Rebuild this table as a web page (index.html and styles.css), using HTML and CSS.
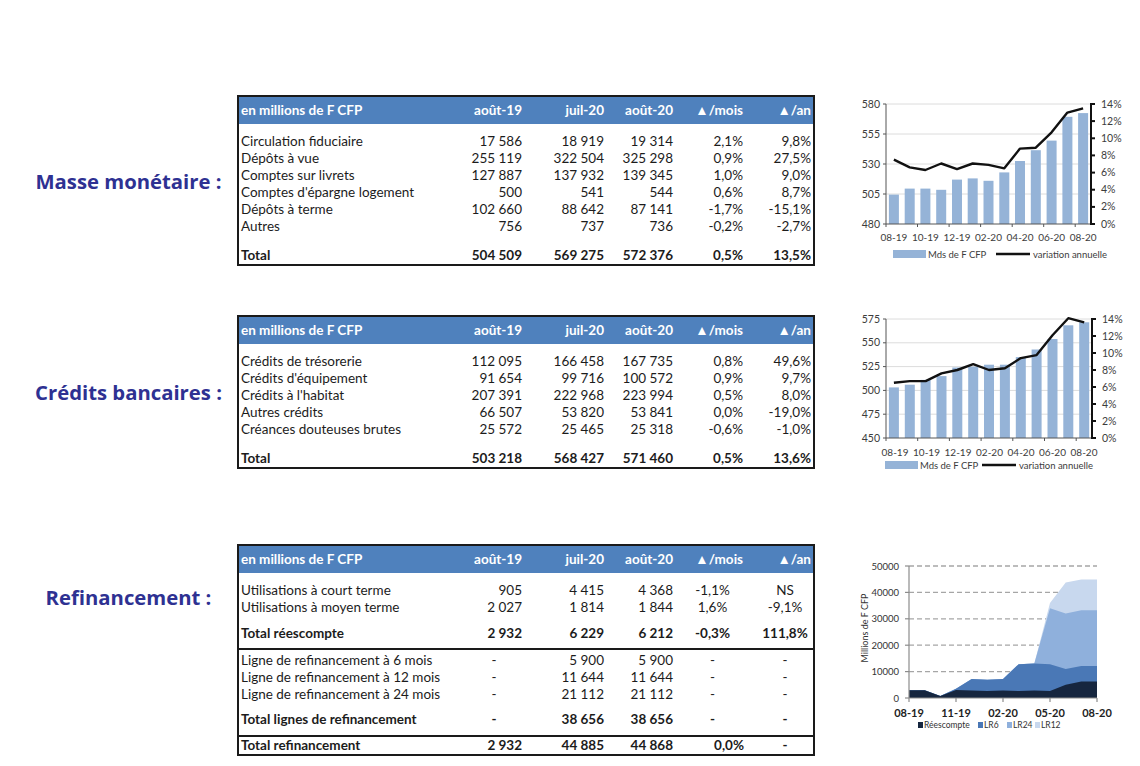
FILE: index.html
```html
<!DOCTYPE html>
<html lang="fr">
<head>
<meta charset="utf-8">
<title>Indicateurs monétaires</title>
<link rel="stylesheet" href="styles.css">
</head>
<body>
<main class="page">

<section class="block block-masse">
  <h2 class="label">Masse monétaire :</h2>
  <table class="tbl">
    <colgroup><col class="w1"><col class="w2"><col class="w3"><col class="w4"><col class="w5"><col class="w6"></colgroup>
    <thead><tr><th class="c-lbl">en millions de F CFP</th><th>août-19</th><th>juil-20</th><th>août-20</th><th>▲/mois</th><th class="last">▲/an</th></tr></thead>
    <tbody>
      <tr class="first"><td class="c-lbl">Circulation fiduciaire</td><td>17 586</td><td>18 919</td><td>19 314</td><td>2,1%</td><td class="last">9,8%</td></tr>
      <tr><td class="c-lbl">Dépôts à vue</td><td>255 119</td><td>322 504</td><td>325 298</td><td>0,9%</td><td class="last">27,5%</td></tr>
      <tr><td class="c-lbl">Comptes sur livrets</td><td>127 887</td><td>137 932</td><td>139 345</td><td>1,0%</td><td class="last">9,0%</td></tr>
      <tr><td class="c-lbl">Comptes d'épargne logement</td><td>500</td><td>541</td><td>544</td><td>0,6%</td><td class="last">8,7%</td></tr>
      <tr><td class="c-lbl">Dépôts à terme</td><td>102 660</td><td>88 642</td><td>87 141</td><td>-1,7%</td><td class="last">-15,1%</td></tr>
      <tr><td class="c-lbl">Autres</td><td>756</td><td>737</td><td>736</td><td>-0,2%</td><td class="last">-2,7%</td></tr>
      <tr class="total"><td class="c-lbl">Total</td><td>504 509</td><td>569 275</td><td>572 376</td><td>0,5%</td><td class="last">13,5%</td></tr>
    </tbody>
  </table>
  <figure class="chart">
    <svg width="290" height="171" viewBox="0 0 290 171">
      <g class="grid">
        <line x1="36" y1="9" x2="241" y2="9"/><line x1="36" y1="39" x2="241" y2="39"/>
        <line x1="36" y1="69" x2="241" y2="69"/><line x1="36" y1="99" x2="241" y2="99"/>
      </g>
      <g class="bars">
        <rect x="38.9" y="99.6" width="10" height="29.4"/><rect x="54.7" y="93.6" width="10" height="35.4"/>
        <rect x="70.4" y="93.6" width="10" height="35.4"/><rect x="86.2" y="94.8" width="10" height="34.2"/>
        <rect x="102" y="84.6" width="10" height="44.4"/><rect x="117.7" y="83.4" width="10" height="45.6"/>
        <rect x="133.5" y="85.8" width="10" height="43.2"/><rect x="149.3" y="77.4" width="10" height="51.6"/>
        <rect x="165" y="66" width="10" height="63"/><rect x="180.8" y="55.2" width="10" height="73.8"/>
        <rect x="196.6" y="45.6" width="10" height="83.4"/><rect x="212.4" y="21.8" width="10" height="107.2"/>
        <rect x="228.1" y="18.1" width="10" height="110.9"/>
      </g>
      <g class="axis">
        <line x1="36" y1="9" x2="36" y2="129"/><line x1="36" y1="129" x2="241" y2="129"/>
        <line x1="33" y1="9" x2="36" y2="9"/><line x1="33" y1="39" x2="36" y2="39"/><line x1="33" y1="69" x2="36" y2="69"/><line x1="33" y1="99" x2="36" y2="99"/><line x1="33" y1="129" x2="36" y2="129"/>
        <line x1="36" y1="129" x2="36" y2="132"/><line x1="67.5" y1="129" x2="67.5" y2="132"/><line x1="99.1" y1="129" x2="99.1" y2="132"/><line x1="130.6" y1="129" x2="130.6" y2="132"/><line x1="162.2" y1="129" x2="162.2" y2="132"/><line x1="193.7" y1="129" x2="193.7" y2="132"/><line x1="225.2" y1="129" x2="225.2" y2="132"/>
      </g>
      <g class="axis-r">
        <line x1="241" y1="8" x2="241" y2="130"/>
        <line x1="241" y1="9" x2="245" y2="9"/><line x1="241" y1="26.1" x2="245" y2="26.1"/><line x1="241" y1="43.3" x2="245" y2="43.3"/><line x1="241" y1="60.4" x2="245" y2="60.4"/><line x1="241" y1="77.6" x2="245" y2="77.6"/><line x1="241" y1="94.7" x2="245" y2="94.7"/><line x1="241" y1="111.9" x2="245" y2="111.9"/><line x1="241" y1="129" x2="245" y2="129"/>
      </g>
      <polyline class="trend" points="43.9,64.7 59.7,72.4 75.4,75 91.2,68.5 107,74.1 122.7,68.5 138.5,69.9 154.3,73.3 170,53.6 185.8,52.7 201.6,37.3 217.4,17.6 233.1,13.3"/>
      <g class="tick-l">
        <text x="30" y="12.5">580</text><text x="30" y="42.5">555</text><text x="30" y="72.5">530</text><text x="30" y="102.5">505</text><text x="30" y="132.5">480</text>
      </g>
      <g class="tick-r">
        <text x="251" y="12.5">14%</text><text x="251" y="29.6">12%</text><text x="251" y="46.8">10%</text><text x="251" y="63.9">8%</text><text x="251" y="81.1">6%</text><text x="251" y="98.2">4%</text><text x="251" y="115.4">2%</text><text x="251" y="132.5">0%</text>
      </g>
      <g class="tick-x">
        <text x="43.9" y="146">08-19</text><text x="75.4" y="146">10-19</text><text x="107" y="146">12-19</text><text x="138.5" y="146">02-20</text><text x="170" y="146">04-20</text><text x="201.6" y="146">06-20</text><text x="233.1" y="146">08-20</text>
      </g>
      <rect class="leg-bar" x="43" y="155" width="33" height="8"/>
      <text class="leg" x="78" y="162.5">Mds de F CFP</text>
      <line class="leg-line" x1="146" y1="159" x2="180" y2="159"/>
      <text class="leg" x="183" y="162.5">variation annuelle</text>
    </svg>
  </figure>
</section>

<section class="block block-credits">
  <h2 class="label">Crédits bancaires :</h2>
  <table class="tbl">
    <colgroup><col class="w1"><col class="w2"><col class="w3"><col class="w4"><col class="w5"><col class="w6"></colgroup>
    <thead><tr><th class="c-lbl">en millions de F CFP</th><th>août-19</th><th>juil-20</th><th>août-20</th><th>▲/mois</th><th class="last">▲/an</th></tr></thead>
    <tbody>
      <tr class="first"><td class="c-lbl">Crédits de trésorerie</td><td>112 095</td><td>166 458</td><td>167 735</td><td>0,8%</td><td class="last">49,6%</td></tr>
      <tr><td class="c-lbl">Crédits d'équipement</td><td>91 654</td><td>99 716</td><td>100 572</td><td>0,9%</td><td class="last">9,7%</td></tr>
      <tr><td class="c-lbl">Crédits à l'habitat</td><td>207 391</td><td>222 968</td><td>223 994</td><td>0,5%</td><td class="last">8,0%</td></tr>
      <tr><td class="c-lbl">Autres crédits</td><td>66 507</td><td>53 820</td><td>53 841</td><td>0,0%</td><td class="last">-19,0%</td></tr>
      <tr><td class="c-lbl">Créances douteuses brutes</td><td>25 572</td><td>25 465</td><td>25 318</td><td>-0,6%</td><td class="last">-1,0%</td></tr>
      <tr class="total"><td class="c-lbl">Total</td><td>503 218</td><td>568 427</td><td>571 460</td><td>0,5%</td><td class="last">13,6%</td></tr>
    </tbody>
  </table>
  <figure class="chart">
    <svg width="290" height="154" viewBox="0 0 290 154">
      <g class="grid">
        <line x1="36" y1="4" x2="242" y2="4"/><line x1="36" y1="27.8" x2="242" y2="27.8"/>
        <line x1="36" y1="51.6" x2="242" y2="51.6"/><line x1="36" y1="75.4" x2="242" y2="75.4"/><line x1="36" y1="99.2" x2="242" y2="99.2"/>
      </g>
      <g class="bars">
        <rect x="38.9" y="72.4" width="10" height="50.6"/><rect x="54.8" y="69.7" width="10" height="53.3"/>
        <rect x="70.6" y="64.9" width="10" height="58.1"/><rect x="86.5" y="61.1" width="10" height="61.9"/>
        <rect x="102.3" y="52.5" width="10" height="70.5"/><rect x="118.2" y="51.6" width="10" height="71.4"/>
        <rect x="134" y="49.7" width="10" height="73.3"/><rect x="149.9" y="49.7" width="10" height="73.3"/>
        <rect x="165.8" y="42.1" width="10" height="80.9"/><rect x="181.6" y="34.5" width="10" height="88.5"/>
        <rect x="197.5" y="24" width="10" height="99"/><rect x="213.3" y="10.3" width="10" height="112.7"/>
        <rect x="229.2" y="7.3" width="10" height="115.7"/>
      </g>
      <g class="axis">
        <line x1="36" y1="4" x2="36" y2="123"/><line x1="36" y1="123" x2="242" y2="123"/>
        <line x1="33" y1="4" x2="36" y2="4"/><line x1="33" y1="27.8" x2="36" y2="27.8"/><line x1="33" y1="51.6" x2="36" y2="51.6"/><line x1="33" y1="75.4" x2="36" y2="75.4"/><line x1="33" y1="99.2" x2="36" y2="99.2"/><line x1="33" y1="123" x2="36" y2="123"/>
        <line x1="36" y1="123" x2="36" y2="126"/><line x1="67.7" y1="123" x2="67.7" y2="126"/><line x1="99.4" y1="123" x2="99.4" y2="126"/><line x1="131.1" y1="123" x2="131.1" y2="126"/><line x1="162.8" y1="123" x2="162.8" y2="126"/><line x1="194.5" y1="123" x2="194.5" y2="126"/><line x1="226.2" y1="123" x2="226.2" y2="126"/>
      </g>
      <g class="axis-r">
        <line x1="242" y1="3" x2="242" y2="124"/>
        <line x1="242" y1="4" x2="246" y2="4"/><line x1="242" y1="21" x2="246" y2="21"/><line x1="242" y1="38" x2="246" y2="38"/><line x1="242" y1="55" x2="246" y2="55"/><line x1="242" y1="72" x2="246" y2="72"/><line x1="242" y1="89" x2="246" y2="89"/><line x1="242" y1="106" x2="246" y2="106"/><line x1="242" y1="123" x2="246" y2="123"/>
      </g>
      <polyline class="trend" points="43.9,67.8 59.8,66.1 75.6,66.1 91.5,58.4 107.3,55 123.2,49.1 139,55 154.9,53.3 170.8,43.1 186.6,40.1 202.5,20.2 218.3,3.2 234.2,7.4"/>
      <g class="tick-l">
        <text x="30" y="7.5">575</text><text x="30" y="31.3">550</text><text x="30" y="55.1">525</text><text x="30" y="78.9">500</text><text x="30" y="102.7">475</text><text x="30" y="126.5">450</text>
      </g>
      <g class="tick-r">
        <text x="252" y="7.5">14%</text><text x="252" y="24.5">12%</text><text x="252" y="41.5">10%</text><text x="252" y="58.5">8%</text><text x="252" y="75.5">6%</text><text x="252" y="92.5">4%</text><text x="252" y="109.5">2%</text><text x="252" y="126.5">0%</text>
      </g>
      <g class="tick-x">
        <text x="45" y="140.5">08-19</text><text x="76.5" y="140.5">10-19</text><text x="108" y="140.5">12-19</text><text x="139.5" y="140.5">02-20</text><text x="171" y="140.5">04-20</text><text x="202.5" y="140.5">06-20</text><text x="234" y="140.5">08-20</text>
      </g>
      <rect class="leg-bar" x="35" y="146" width="33" height="8"/>
      <text class="leg" x="70" y="153.5">Mds de F CFP</text>
      <line class="leg-line" x1="132" y1="150" x2="166" y2="150"/>
      <text class="leg" x="169" y="153.5">variation annuelle</text>
    </svg>
  </figure>
</section>

<section class="block block-refi">
  <h2 class="label">Refinancement :</h2>
  <table class="tbl tbl-refi">
    <colgroup><col class="w1"><col class="w2"><col class="w3"><col class="w4"><col class="w5"><col class="w6"></colgroup>
    <thead><tr><th class="c-lbl">en millions de F CFP</th><th>août-19</th><th>juil-20</th><th>août-20</th><th>▲/mois</th><th class="last">▲/an</th></tr></thead>
    <tbody>
      <tr class="first"><td class="c-lbl">Utilisations à court terme</td><td>905</td><td>4 415</td><td>4 368</td><td class="ctr-m">-1,1%</td><td class="ctr-a">NS</td></tr>
      <tr><td class="c-lbl">Utilisations à moyen terme</td><td>2 027</td><td>1 814</td><td>1 844</td><td class="ctr-m">1,6%</td><td class="ctr-a">-9,1%</td></tr>
      <tr class="sub sep"><td class="c-lbl">Total réescompte</td><td>2 932</td><td>6 229</td><td>6 212</td><td class="ctr-m">-0,3%</td><td class="ctr-a">111,8%</td></tr>
      <tr class="after-sep"><td class="c-lbl">Ligne de refinancement à 6 mois</td><td class="dash">-</td><td>5 900</td><td>5 900</td><td class="ctr-m">-</td><td class="ctr-a">-</td></tr>
      <tr><td class="c-lbl">Ligne de refinancement à 12 mois</td><td class="dash">-</td><td>11 644</td><td>11 644</td><td class="ctr-m">-</td><td class="ctr-a">-</td></tr>
      <tr><td class="c-lbl">Ligne de refinancement à 24 mois</td><td class="dash">-</td><td>21 112</td><td>21 112</td><td class="ctr-m">-</td><td class="ctr-a">-</td></tr>
      <tr class="sub sep sep2"><td class="c-lbl">Total lignes de refinancement</td><td class="dash">-</td><td>38 656</td><td>38 656</td><td class="ctr-m">-</td><td class="ctr-a">-</td></tr>
      <tr class="grand"><td class="c-lbl">Total refinancement</td><td>2 932</td><td>44 885</td><td>44 868</td><td class="mois-r">0,0%</td><td class="ctr-a">-</td></tr>
    </tbody>
  </table>
  <figure class="chart">
    <svg width="290" height="211" viewBox="0 0 290 211">
      <g class="grid-d">
        <line x1="59" y1="22" x2="247" y2="22"/><line x1="59" y1="48.4" x2="247" y2="48.4"/>
        <line x1="59" y1="74.8" x2="247" y2="74.8"/><line x1="59" y1="101.2" x2="247" y2="101.2"/><line x1="59" y1="127.6" x2="247" y2="127.6"/>
      </g>
      <polygon class="a-lr12" points="59,146.3 74.7,146.3 90.3,151.9 106,144.8 121.7,135 137.3,135.8 153,135 168.7,120.2 184.3,119.4 200,59 215.7,38.4 231.3,35.5 247,35.5 247,154 59,154"/>
      <polygon class="a-lr24" points="59,146.3 74.7,146.3 90.3,151.9 106,144.8 121.7,135 137.3,135.8 153,135 168.7,120.2 184.3,119.4 200,64.2 215.7,69.5 231.3,66.2 247,66.3 247,154 59,154"/>
      <polygon class="a-lr6" points="59,146.3 74.7,146.3 90.3,151.9 106,144.8 121.7,135 137.3,135.8 153,135 168.7,120.2 184.3,119.4 200,120.2 215.7,125 231.3,122 247,122 247,154 59,154"/>
      <polygon class="a-rees" points="59,146.3 74.7,146.3 90.3,151.9 106,146.1 121.7,146.6 137.3,147.1 153,146.6 168.7,147.1 184.3,146.6 200,146.9 215.7,140.8 231.3,137.6 247,137.6 247,154 59,154"/>
      <g class="axis-g">
        <line x1="59" y1="22" x2="59" y2="154"/><line x1="59" y1="154" x2="247" y2="154"/>
        <line x1="55" y1="22" x2="59" y2="22"/><line x1="55" y1="48.4" x2="59" y2="48.4"/><line x1="55" y1="74.8" x2="59" y2="74.8"/><line x1="55" y1="101.2" x2="59" y2="101.2"/><line x1="55" y1="127.6" x2="59" y2="127.6"/><line x1="55" y1="154" x2="59" y2="154"/>
        <line x1="59" y1="154" x2="59" y2="158"/><line x1="106" y1="154" x2="106" y2="158"/><line x1="153" y1="154" x2="153" y2="158"/><line x1="200" y1="154" x2="200" y2="158"/><line x1="247" y1="154" x2="247" y2="158"/>
      </g>
      <g class="tick-l3">
        <text x="49" y="25.5">50000</text><text x="49" y="51.9">40000</text><text x="49" y="78.3">30000</text><text x="49" y="104.7">20000</text><text x="49" y="131.1">10000</text><text x="49" y="157.5">0</text>
      </g>
      <text class="y-title" transform="translate(18 84) rotate(-90)">Millions de F CFP</text>
      <g class="tick-x3">
        <text x="59" y="173">08-19</text><text x="106" y="173">11-19</text><text x="153" y="173">02-20</text><text x="200" y="173">05-20</text><text x="247" y="173">08-20</text>
      </g>
      <rect class="a-rees" x="68" y="178" width="5" height="6"/><text class="leg3" x="74" y="184">Réescompte</text>
      <rect class="a-lr6" x="128" y="178" width="5" height="6"/><text class="leg3" x="134" y="184">LR6</text>
      <rect class="a-lr24" x="157" y="178" width="5" height="6"/><text class="leg3" x="163" y="184">LR24</text>
      <rect class="a-lr12" x="185" y="178" width="5" height="6"/><text class="leg3" x="191" y="184">LR12</text>
    </svg>
  </figure>
</section>

</main>
</body>
</html>
```

FILE: styles.css
```css
* { box-sizing: border-box; }
html, body { margin: 0; padding: 0; background: #ffffff; }
body {
  width: 1140px;
  height: 766px;
  overflow: hidden;
  font-family: Lato, "Open Sans", "DejaVu Sans", sans-serif;
  color: #1c1c1c;
}
.page { padding-top: 95px; }

.block {
  display: grid;
  grid-template-columns: 237px 578px 325px;
  align-items: start;
}
.block-credits { margin-top: 49px; }
.block-refi { margin-top: 75px; }

.label {
  margin: 0;
  padding-left: 20px;
  align-self: center;
  text-align: center;
  white-space: nowrap;
  font-family: "Open Sans", Lato, sans-serif;
  font-size: 20.3px;
  line-height: 28px;
  font-weight: 700;
  color: #2e3192;
}
.block-refi .label { align-self: start; margin-top: 39px; }

/* tables */
.tbl {
  width: 578px;
  table-layout: fixed;
  border-collapse: separate;
  border-spacing: 0;
  border: 2px solid #1a1a1a;
  font-family: Lato, "Open Sans", sans-serif;
  font-size: 13.5px;
}
.w1 { width: 213px; }
.w2 { width: 71px; }
.w3 { width: 82px; }
.w4 { width: 69px; }
.w5 { width: 70px; }
.w6 { width: 69px; }

.tbl th {
  background: #4f81bd;
  color: #ffffff;
  font-weight: 700;
  line-height: 27px;
  padding: 0 1px 0 0;
  text-align: right;
  white-space: nowrap;
}
.tbl td {
  line-height: 17px;
  padding: 0 1px 0 0;
  text-align: right;
  white-space: nowrap;
}
.tbl .c-lbl { text-align: left; padding-left: 2px; }
.tbl .last { padding-right: 2px; }
.tbl tr.first td { padding-top: 9px; }
.tbl tr.total td { padding-top: 12px; font-weight: 700; }

.tbl-refi tr.sub td { padding-top: 9px; padding-bottom: 6px; font-weight: 700; }
.tbl-refi tr.sep td { border-bottom: 2px solid #1a1a1a; }
.tbl-refi tr.sep2 td { padding-top: 8px; padding-bottom: 7px; }
.tbl-refi tr.after-sep td { padding-top: 2px; }
.tbl-refi tr.grand td { font-weight: 700; }
.tbl-refi td.dash { text-align: center; padding-left: 14px; }
.tbl-refi td.ctr-m { text-align: center; padding-left: 8px; }
.tbl-refi td.ctr-a { text-align: center; padding-left: 14px; }
.tbl-refi td.mois-r { text-align: right; padding-right: 0; }

/* charts */
.chart { margin: 0 0 0 35px; }
.chart svg { display: block; overflow: visible; }
.grid line { stroke: #dcdcdc; stroke-width: 1; }
.bars rect { fill: #95b3d7; }
.axis line { stroke: #555555; stroke-width: 1; }
.axis-r line { stroke: #111111; stroke-width: 2; }
.trend { fill: none; stroke: #111111; stroke-width: 2.4; stroke-linejoin: round; }
.tick-l text, .tick-r text, .tick-x text, .leg {
  font-family: Lato, "Open Sans", sans-serif;
  font-size: 10.5px;
  fill: #3c3c3c;
}
.leg { font-size: 9.5px; }
.tick-x text { font-size: 10px; text-anchor: middle; }
.tick-l text { text-anchor: end; }
.leg-bar { fill: #95b3d7; }
.leg-line { stroke: #111111; stroke-width: 2.4; }

.grid-d line { stroke: #a6a6a6; stroke-width: 1.3; stroke-dasharray: 5 3; }
.axis-g line { stroke: #8c8c8c; stroke-width: 1.2; }
.a-rees { fill: #16263f; }
.a-lr6 { fill: #4a78b6; }
.a-lr24 { fill: #8fb0dc; }
.a-lr12 { fill: #c8d8ee; }
.tick-l3 text { font-family: Lato, sans-serif; font-size: 9.5px; fill: #333333; text-anchor: end; }
.y-title { font-family: Lato, sans-serif; font-size: 9px; fill: #333333; text-anchor: middle; }
.tick-x3 text { font-family: Lato, sans-serif; font-size: 11px; font-weight: 700; fill: #222222; text-anchor: middle; }
.leg3 { font-family: Lato, sans-serif; font-size: 8.5px; fill: #333333; }
```
